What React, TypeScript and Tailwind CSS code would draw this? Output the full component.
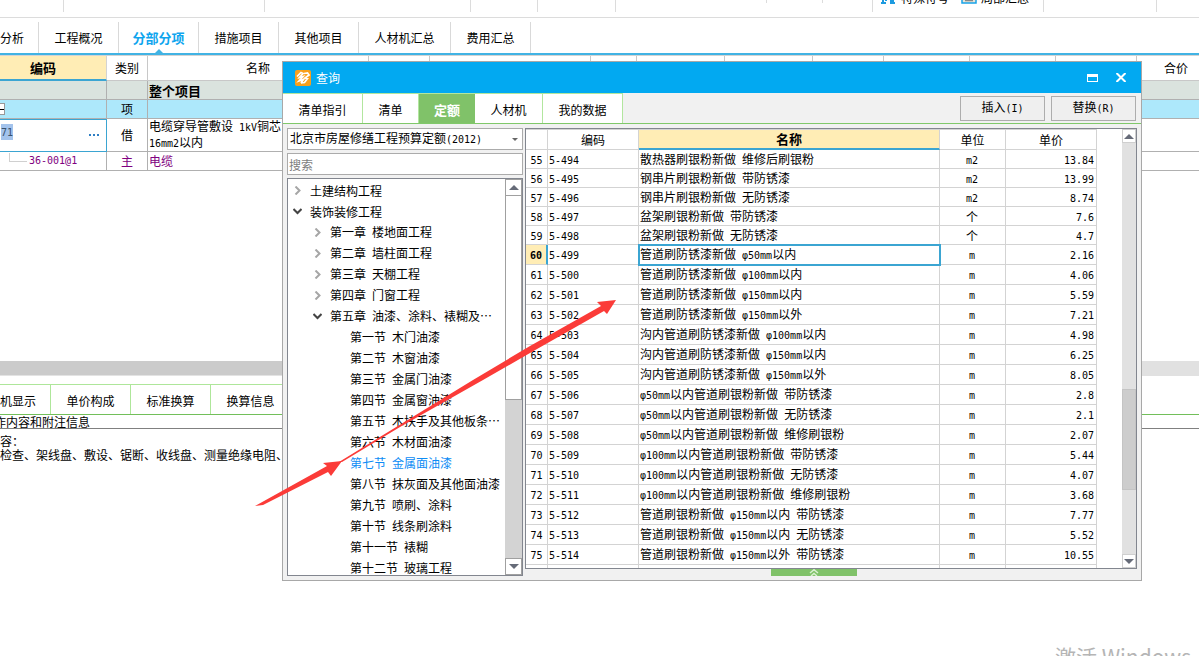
import React from 'react';

const LATIN = /([^\u3000-\u303f\u4e00-\u9fff\uff00-\uffef…]+)/;

/** Song-style mixed text: full-width Chinese with half-width Latin runs. */
function T({ s }: { s: string }) {
  return (
    <>
      {s.split(LATIN).map((part, i) =>
        i % 2 === 1 ? (
          <span key={i} className="whitespace-pre font-['DejaVu_Sans_Mono',monospace] text-[10px]">{part}</span>
        ) : (
          part
        ),
      )}
    </>
  );
}

const mainTabs = [
  { label: '分析', cls: 'w-[39px] pr-4' },
  { label: '工程概况', cls: 'w-20' },
  { label: '分部分项', cls: 'w-20', active: true },
  { label: '措施项目', cls: 'w-20' },
  { label: '其他项目', cls: 'w-20' },
  { label: '人材机汇总', cls: 'w-[92px]' },
  { label: '费用汇总', cls: 'w-20' },
];

const headCols = ['w-[221px]', 'w-[61px]', 'w-[161px]', 'w-[46px]', 'w-[88px]', 'w-[88px]', 'w-[71px]', 'w-[86px]', 'w-[86px]', 'w-[81px]'];

const tree: { label: string; depth: number; state?: 'open' | 'closed'; active?: boolean }[] = [
  { label: '土建结构工程', depth: 0, state: 'closed' },
  { label: '装饰装修工程', depth: 0, state: 'open' },
  { label: '第一章 楼地面工程', depth: 1, state: 'closed' },
  { label: '第二章 墙柱面工程', depth: 1, state: 'closed' },
  { label: '第三章 天棚工程', depth: 1, state: 'closed' },
  { label: '第四章 门窗工程', depth: 1, state: 'closed' },
  { label: '第五章 油漆、涂料、裱糊及…', depth: 1, state: 'open' },
  { label: '第一节 木门油漆', depth: 2 },
  { label: '第二节 木窗油漆', depth: 2 },
  { label: '第三节 金属门油漆', depth: 2 },
  { label: '第四节 金属窗油漆', depth: 2 },
  { label: '第五节 木扶手及其他板条…', depth: 2 },
  { label: '第六节 木材面油漆', depth: 2 },
  { label: '第七节 金属面油漆', depth: 2, active: true },
  { label: '第八节 抹灰面及其他面油漆', depth: 2 },
  { label: '第九节 喷刷、涂料', depth: 2 },
  { label: '第十节 线条刷涂料', depth: 2 },
  { label: '第十一节 裱糊', depth: 2 },
  { label: '第十二节 玻璃工程', depth: 2 },
];

const quota: [number, string, string, string, string][] = [
  [55, '5-494', '散热器刷银粉新做 维修后刷银粉', 'm2', '13.84'],
  [56, '5-495', '钢串片刷银粉新做 带防锈漆', 'm2', '13.99'],
  [57, '5-496', '钢串片刷银粉新做 无防锈漆', 'm2', '8.74'],
  [58, '5-497', '盆架刷银粉新做 带防锈漆', '个', '7.6'],
  [59, '5-498', '盆架刷银粉新做 无防锈漆', '个', '4.7'],
  [60, '5-499', '管道刷防锈漆新做 φ50mm以内', 'm', '2.16'],
  [61, '5-500', '管道刷防锈漆新做 φ100mm以内', 'm', '4.06'],
  [62, '5-501', '管道刷防锈漆新做 φ150mm以内', 'm', '5.59'],
  [63, '5-502', '管道刷防锈漆新做 φ150mm以外', 'm', '7.21'],
  [64, '5-503', '沟内管道刷防锈漆新做 φ100mm以内', 'm', '4.98'],
  [65, '5-504', '沟内管道刷防锈漆新做 φ150mm以内', 'm', '6.25'],
  [66, '5-505', '沟内管道刷防锈漆新做 φ150mm以外', 'm', '8.05'],
  [67, '5-506', 'φ50mm以内管道刷银粉新做 带防锈漆', 'm', '2.8'],
  [68, '5-507', 'φ50mm以内管道刷银粉新做 无防锈漆', 'm', '2.1'],
  [69, '5-508', 'φ50mm以内管道刷银粉新做 维修刷银粉', 'm', '2.07'],
  [70, '5-509', 'φ100mm以内管道刷银粉新做 带防锈漆', 'm', '5.44'],
  [71, '5-510', 'φ100mm以内管道刷银粉新做 无防锈漆', 'm', '4.07'],
  [72, '5-511', 'φ100mm以内管道刷银粉新做 维修刷银粉', 'm', '3.68'],
  [73, '5-512', '管道刷银粉新做 φ150mm以内 带防锈漆', 'm', '7.77'],
  [74, '5-513', '管道刷银粉新做 φ150mm以内 无防锈漆', 'm', '5.52'],
  [75, '5-514', '管道刷银粉新做 φ150mm以外 带防锈漆', 'm', '10.55'],
];

function Chevron({ state }: { state?: 'open' | 'closed' }) {
  if (!state) return <span className="w-[9px] shrink-0" />;
  return (
    <svg viewBox="0 0 9 9" className="h-[9px] w-[9px] shrink-0" fill="none" strokeWidth="2">
      {state === 'closed' ? <path d="M2.5 .5 6.500 4.500 2.500 8.500" stroke="#a6a6a6" /> : <path d="M.5 2 4.500 6 8.500 2" stroke="#444" />}
    </svg>
  );
}

function Triangle({ down }: { down?: boolean }) {
  return (
    <svg viewBox="0 0 10 5" className="h-[5px] w-[10px]" fill="#666b78">
      <path d={down ? 'M0 0h10L5 5z' : 'M0 5h10L5 0z'} />
    </svg>
  );
}

function TopRibbon() {
  const line = 'shrink-0 border-r border-[#dcdcdc]';
  return (
    <div className="flex h-[18px] items-start overflow-hidden border-b border-[#dcdcdc]">
      <div className={`${line} h-3 w-16`} />
      <div className={`${line} h-3 w-[201px]`} />
      <div className={`${line} h-3 w-[206px]`} />
      <div className={`${line} h-3 w-[67px]`} />
      <div className={`${line} h-3 w-[78px]`} />
      <div className={`${line} h-[3px] w-[151px]`} />
      <div className={`${line} h-[3px] w-[56px]`} />
      <div className={`${line} h-3 w-[50px]`} />
      <div className="flex h-3 w-[171px] shrink-0 items-start overflow-hidden border-r border-[#dcdcdc] pl-2">
        <button className="-mt-[10px] flex shrink-0 items-start gap-[6px] whitespace-nowrap">
          <svg viewBox="0 0 14 14" className="h-[14px] w-[14px]" fill="none" stroke="#1d9be0" strokeWidth="2">
            <path d="M1 3h4v8M0 13h5M3 11H1M9 3h4M10 3v7M9 11h4M9 13h5" />
          </svg>
          <span>特殊符号</span>
        </button>
        <button className="-mt-[10px] ml-3 flex shrink-0 items-start gap-1 whitespace-nowrap">
          <svg viewBox="0 0 16 14" className="h-[14px] w-4" fill="#e8e4d8" stroke="#17a2e8" strokeWidth="1.500">
            <path d="M1 1h14v12H1z" />
            <path d="M4 10.500h8" stroke="#888" />
          </svg>
          <span>局部汇总</span>
        </button>
      </div>
      <div className={`${line} h-3 w-[113px]`} />
    </div>
  );
}

function MainTabs() {
  return (
    <nav className="flex h-[37px] items-end border-b-2 border-[#41b3e4]">
      {mainTabs.map((t) => (
        <button
          key={t.label}
          className={`${t.cls} relative h-[31px] shrink-0 whitespace-nowrap border-r border-[#d9d9d9] ${t.active ? 'text-[13px] font-bold text-[#0ea5ee]' : ''}`}
        >
          {t.label}
          {t.active && (
            <svg viewBox="0 0 8 4" className="absolute bottom-0 left-9 h-1 w-2" fill="#41b3e4">
              <path d="M0 4 4 0l4 4z" />
            </svg>
          )}
        </button>
      ))}
    </nav>
  );
}

function ItemTable() {
  const cell = 'border-b border-r border-[#b0b0b0] p-0';
  const rest = 'border-b border-[#b0b0b0] p-0';
  return (
    <table className="w-full table-fixed border-separate border-spacing-0 border-t border-[#d3d3d3]">
      <colgroup>
        <col className="w-[107px]" />
        <col className="w-[41px]" />
        {headCols.map((w, i) => (
          <col key={i} className={w} />
        ))}
        <col />
      </colgroup>
      <thead>
        <tr className="h-[25px]">
          <th className="border-b-2 border-r border-b-[#3ba5d2] border-r-[#d3d3d3] bg-[#ffedb5] p-0 pr-5 text-[13px] font-bold">编码</th>
          <th className="border-b border-r border-[#c8c8c8] p-0 font-normal">类别</th>
          <th className="border-b border-r border-[#c8c8c8] p-0 font-normal">名称</th>
          {headCols.slice(1).map((_, i) => (
            <th key={i} className="border-b border-r border-[#c8c8c8] p-0" />
          ))}
          <th className="border-b border-[#c8c8c8] p-0 pl-4 font-normal">合价</th>
        </tr>
      </thead>
      <tbody>
        <tr className="h-[19px] bg-[#dae3de]">
          <td className={cell} />
          <td className={cell} />
          <td className={`${cell} pl-px pt-px text-[13px] font-bold`}>整个项目</td>
          <td colSpan={10} className={rest} />
        </tr>
        <tr className="h-[19px] bg-[#ade8fb]">
          <td className={cell}>
            <button aria-label="折叠" className="-ml-[7px] flex h-3 w-3 items-center justify-end border border-[#999] bg-white">
              <span className="h-px w-2 bg-black" />
            </button>
          </td>
          <td className={`${cell} text-center`}>项</td>
          <td className={cell} />
          <td colSpan={10} className={rest} />
        </tr>
        <tr className="h-[33px]">
          <td className="border border-l-0 border-[#3ba5d2] p-0">
            <div className="-mt-2 flex items-start justify-between pr-[7px]">
              <span className="-ml-[5px] flex">
                <T s="-" />
                <span className="bg-[#a3c3ec] leading-[14px] text-[#37516e]"><T s="71" /></span>
              </span>
              <button aria-label="更多" className="mt-[10px] flex gap-[2px]">
                <span className="h-[2px] w-[2px] bg-[#2f7fc4]" />
                <span className="h-[2px] w-[2px] bg-[#2f7fc4]" />
                <span className="h-[2px] w-[2px] bg-[#2f7fc4]" />
              </button>
            </div>
          </td>
          <td className={`${cell} text-center`}>借</td>
          <td className={`${cell} whitespace-nowrap pl-px leading-[14px]`}>
            <T s="电缆穿导管敷设 1kV铜芯" />
            <br />
            <T s="16mm2以内" />
          </td>
          <td colSpan={10} className={rest} />
        </tr>
        <tr className="h-[19px] text-[#800080]">
          <td className={cell}>
            <div className="flex pl-[9px]">
              <span className="mr-[2px] h-[9px] w-[18px] border-b border-l border-[#d0d0d0]" />
              <T s="36-001@1" />
            </div>
          </td>
          <td className={`${cell} text-center`}>主</td>
          <td className={`${cell} pl-px`}>电缆</td>
          <td colSpan={10} className={rest} />
        </tr>
      </tbody>
    </table>
  );
}

function DetailPane() {
  const tab = 'h-[30px] w-20 shrink-0 whitespace-nowrap border-r border-t border-[#aee69a] pt-[2px]';
  return (
    <section>
      <div className="flex h-[15px]">
        <div className="w-[283px] border-b border-[#e3e3e3] bg-[#cbcbcb]" />
        <div className="flex-1 bg-[#e1e1e1]" />
      </div>
      <div className="mt-2 flex border-b border-[#72bf5a]">
        <button className="h-[30px] w-[51px] shrink-0 whitespace-nowrap border-r border-t border-[#aee69a] pr-[18px] pt-[2px]">
          机显示
        </button>
        <button className={tab}>单价构成</button>
        <button className={tab}>标准换算</button>
        <button className={tab}>换算信息</button>
      </div>
      <div className="h-[14px] border-b border-[#808080] leading-[14px]">
        <span className="-ml-[6px]">作内容和附注信息</span>
      </div>
      <p className="pt-[5px] leading-[14px]">
        容：
        <br />
        检查、架线盘、敷设、锯断、收线盘、测量绝缘电阻、
      </p>
    </section>
  );
}

function DialogTabs() {
  const tab = 'whitespace-nowrap border-r border-[#b2e69e] bg-white';
  return (
    <div className="flex h-[31px] border-b border-[#80c86a] bg-[#f1f1f1]">
      <div className="flex border-t border-[#b2e69e] [&>button]:h-full [&>button]:pt-[2px]">
        <button className={`${tab} w-20`}>清单指引</button>
        <button className={`${tab} w-14`}>清单</button>
        <button className="w-14 whitespace-nowrap bg-[#80c269] text-[13px] font-bold text-white">定额</button>
        <button className={`${tab} w-[68px]`}>人材机</button>
        <button className={`${tab} w-20`}>我的数据</button>
      </div>
      <div className="ml-auto flex items-center gap-[6px] pr-[5px]">
        <button className="h-[25px] w-[85px] border border-[#adadad] bg-[#efefef]"><T s="插入(I)" /></button>
        <button className="h-[25px] w-[85px] border border-[#adadad] bg-[#efefef]"><T s="替换(R)" /></button>
      </div>
    </div>
  );
}

function CatalogPane() {
  return (
    <aside className="flex w-[236px] shrink-0 flex-col gap-[3px]">
      <div className="relative h-[22px] border border-[#ababab] bg-white">
        <div className="pointer-events-none flex h-full items-center justify-between pl-[2px] pr-1">
          <span className="whitespace-nowrap"><T s="北京市房屋修缮工程预算定额(2012)" /></span>
          <svg viewBox="0 0 6 3" className="h-[3px] w-[6px]" fill="#666"><path d="M0 0h6L3 3z" /></svg>
        </div>
        <select aria-label="定额库" className="absolute inset-0 h-full w-full opacity-0">
          <option>北京市房屋修缮工程预算定额(2012)</option>
        </select>
      </div>
      <input
        aria-label="搜索"
        placeholder="搜索"
        className="h-[22px] border border-[#ababab] bg-white px-px outline-none placeholder:text-[#7d7d7d]"
      />
      <div className="flex h-[398px] border border-[#82868f] bg-white">
        <ul className="min-w-0 flex-1 overflow-hidden pt-px">
          {tree.map((n) => (
            <li
              key={n.label}
              className={`flex h-[21px] items-center gap-2 whitespace-nowrap ${
                n.depth === 0 ? 'pl-[5px]' : n.depth === 1 ? 'pl-[25px]' : 'pl-[45px]'
              } ${n.active ? 'text-[#0d8cf5]' : ''}`}
            >
              <Chevron state={n.state} />
              <span><T s={n.label} /></span>
            </li>
          ))}
        </ul>
        <div className="flex w-[17px] shrink-0 flex-col bg-[#d3d3d3]">
          <button aria-label="向上滚动" className="flex h-[17px] items-center justify-center border border-[#a0a0a0] bg-white"><Triangle /></button>
          <div className="h-[204px] border border-t-0 border-[#a0a0a0] bg-white" />
          <button aria-label="向下滚动" className="mt-auto flex h-[17px] items-center justify-center border border-[#a0a0a0] bg-white"><Triangle down /></button>
        </div>
      </div>
    </aside>
  );
}

function QuotaTable() {
  const cell = 'border-b border-r border-[#d3d3d3] px-0 pb-0 pt-px leading-[14px]';
  return (
    <div className="flex h-[441px] overflow-hidden border border-[#82868f] bg-white">
      <div className="min-w-0 flex-1 overflow-hidden pr-[25px]">
        <table className="w-full table-fixed border-separate border-spacing-0 border-t border-[#d3d3d3]">
          <colgroup>
            <col className="w-[22px]" />
            <col className="w-[91px]" />
            <col />
            <col className="w-[66px]" />
            <col className="w-[91px]" />
          </colgroup>
          <thead>
            <tr className="h-5">
              <th className={cell} aria-label="序号" />
              <th className={`${cell} font-normal`}>编码</th>
              <th className="border-b-2 border-r border-b-[#3ba5d2] border-r-[#d3d3d3] bg-[#ffedb5] p-0 text-[13px] font-bold">名称</th>
              <th className={`${cell} font-normal`}>单位</th>
              <th className={`${cell} font-normal`}>单价</th>
            </tr>
          </thead>
          <tbody>
            {quota.map(([no, code, name, unit, price]) => {
              const on = no === 60;
              return (
                <tr key={no} className={no < 60 ? 'h-[19px]' : 'h-5'}>
                  <td
                    className={
                      on
                        ? 'border-b border-r-2 border-b-[#d3d3d3] border-r-[#3ba5d2] bg-[#ffedb5] px-0 pb-0 pt-px text-center font-bold leading-[14px]'
                        : `${cell} text-center`
                    }
                  >
                    <T s={String(no)} />
                  </td>
                  <td className={`${cell} pl-px`}><T s={code} /></td>
                  <td className={`${cell} whitespace-nowrap pl-px ${on ? 'outline-2 -outline-offset-1 outline-[#3ba5d2]' : ''}`}><T s={name} /></td>
                  <td className={`${cell} pr-px text-center`}><T s={unit} /></td>
                  <td className={`${cell} pr-[2px] text-right`}><T s={price} /></td>
                </tr>
              );
            })}
            <tr className="h-5">
              <td className={cell} /><td className={cell} /><td className={cell} /><td className={cell} /><td className={cell} />
            </tr>
          </tbody>
        </table>
      </div>
      <div className="flex w-[14px] shrink-0 flex-col bg-[#e1e1e1]">
        <button aria-label="向上滚动" className="flex h-[14px] items-center justify-center border border-[#cfcfcf] bg-white"><Triangle /></button>
        <div className="mt-auto h-[101px] border border-[#c4c4c4] bg-[#cdcdcd]" />
        <button aria-label="向下滚动" className="mt-16 flex h-[14px] items-center justify-center border border-[#cfcfcf] bg-white"><Triangle down /></button>
      </div>
    </div>
  );
}

function QueryDialog() {
  return (
    <div role="dialog" aria-label="查询" className="absolute left-[282px] right-[57px] top-[61px] border border-[#a8a8a8] bg-[#f1f1f1]">
      <header className="flex h-[31px] items-center bg-[#02a9f1] pl-3 pr-[15px] text-white">
        <svg viewBox="0 0 16 16" className="h-4 w-4">
          <rect width="16" height="16" rx="2" fill="#f9a01b" />
          <path d="M2 6.500 6 2.500 8 3.500 4.500 7.500 8 6.500 4 11 8.500 9.500 6 13" fill="none" stroke="#fff" strokeWidth="1.700" />
          <path d="M9 3.500 12.500 3 14 5 10 8 12.500 8.500 9.500 12.500 6 13" fill="none" stroke="#fff" strokeWidth="1.700" />
        </svg>
        <h1 className="pl-[5px]">查询</h1>
        <div className="ml-auto flex items-center gap-[18px]">
          <button aria-label="最大化" className="h-2 w-[11px] border border-t-[3px] border-white" />
          <button aria-label="关闭">
            <svg viewBox="0 0 10 9" className="h-[9px] w-[10px]" stroke="#fff" strokeWidth="2"><path d="M.5 0 9.500 9M9.500 0 .5 9" /></svg>
          </button>
        </div>
      </header>
      <DialogTabs />
      <div className="flex gap-[2px] px-1 pb-1 pt-1">
        <CatalogPane />
        <div className="min-w-0 flex-1">
          <QuotaTable />
          <button aria-label="展开" className="ml-[246px] flex h-[7px] w-[86px] justify-center bg-[#80c269]">
            <svg viewBox="0 0 10 7" className="h-[7px] w-[10px]" fill="none" stroke="#d8f0cf" strokeWidth="1.500"><path d="M1 4 5 .7 9 4M2 7 5 4.500 8 7" /></svg>
          </button>
        </div>
      </div>
    </div>
  );
}

export default function App() {
  return (
    <main className="relative min-h-screen overflow-hidden bg-white font-['Noto_Sans_CJK_SC',sans-serif] text-[12px] leading-4 text-black">
      <TopRibbon />
      <MainTabs />
      <ItemTable />
      <div className="pt-[190px]"><DetailPane /></div>
      <QueryDialog />
      <svg viewBox="0 0 362 208" className="pointer-events-none absolute left-[255px] top-[299px] h-[208px] w-[362px]" fill="#fb3b38">
        <path d="M0 207 72 167 68 164 87 162 76 177 73 173 8 206z" />
        <path d="M84 163 218 81 275 47 346 7 342 3 361 1 352 15 349 12 305 37 275 54 228 81 145 128 87 163z" />
      </svg>
      <div className="absolute -bottom-3 right-2 whitespace-nowrap text-[21px] leading-6 text-[#b5b5b5]">激活 Windows</div>
    </main>
  );
}
